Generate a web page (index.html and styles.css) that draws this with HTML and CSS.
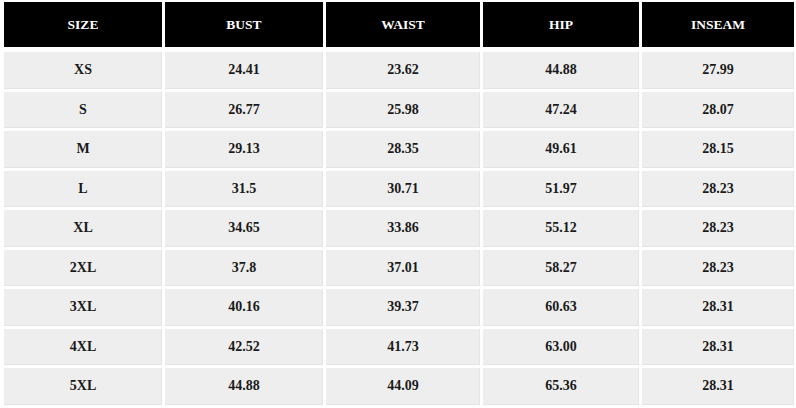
FILE: index.html
```html
<!DOCTYPE html>
<html lang="en">
<head>
<meta charset="utf-8">
<title>Size Chart</title>
<link rel="stylesheet" href="styles.css">
</head>
<body>
<div class="chart">
  <div class="cell head">SIZE</div><div class="cell head">BUST</div><div class="cell head">WAIST</div><div class="cell head">HIP</div><div class="cell head">INSEAM</div>
  <div class="cell">XS</div><div class="cell">24.41</div><div class="cell">23.62</div><div class="cell">44.88</div><div class="cell">27.99</div>
  <div class="cell">S</div><div class="cell">26.77</div><div class="cell">25.98</div><div class="cell">47.24</div><div class="cell">28.07</div>
  <div class="cell">M</div><div class="cell">29.13</div><div class="cell">28.35</div><div class="cell">49.61</div><div class="cell">28.15</div>
  <div class="cell">L</div><div class="cell">31.5</div><div class="cell">30.71</div><div class="cell">51.97</div><div class="cell">28.23</div>
  <div class="cell">XL</div><div class="cell">34.65</div><div class="cell">33.86</div><div class="cell">55.12</div><div class="cell">28.23</div>
  <div class="cell">2XL</div><div class="cell">37.8</div><div class="cell">37.01</div><div class="cell">58.27</div><div class="cell">28.23</div>
  <div class="cell">3XL</div><div class="cell">40.16</div><div class="cell">39.37</div><div class="cell">60.63</div><div class="cell">28.31</div>
  <div class="cell">4XL</div><div class="cell">42.52</div><div class="cell">41.73</div><div class="cell">63.00</div><div class="cell">28.31</div>
  <div class="cell">5XL</div><div class="cell">44.88</div><div class="cell">44.09</div><div class="cell">65.36</div><div class="cell">28.31</div>
</div>
</body>
</html>
```
FILE: styles.css
```css
html, body {
  margin: 0;
  padding: 0;
  background: #ffffff;
}
.chart {
  display: grid;
  grid-template-columns: 158px 158px 154px 156px 152px;
  grid-template-rows: 47px repeat(9, 36.5px);
  column-gap: 3px;
  row-gap: 3px;
  padding: 2px 0 0 4px;
  font-family: "Liberation Serif", "Times New Roman", serif;
  font-weight: bold;
  font-size: 14px;
  color: #1a1a1a;
}
.cell {
  display: flex;
  align-items: center;
  justify-content: center;
  background: #eeeeee;
  box-shadow: inset -1px -1px 0 #e4e4e4;
}
.head {
  height: 45px;
  background: #000000;
  color: #ffffff;
  font-size: 13.5px;
  box-shadow: none;
  align-self: start;
}
```
